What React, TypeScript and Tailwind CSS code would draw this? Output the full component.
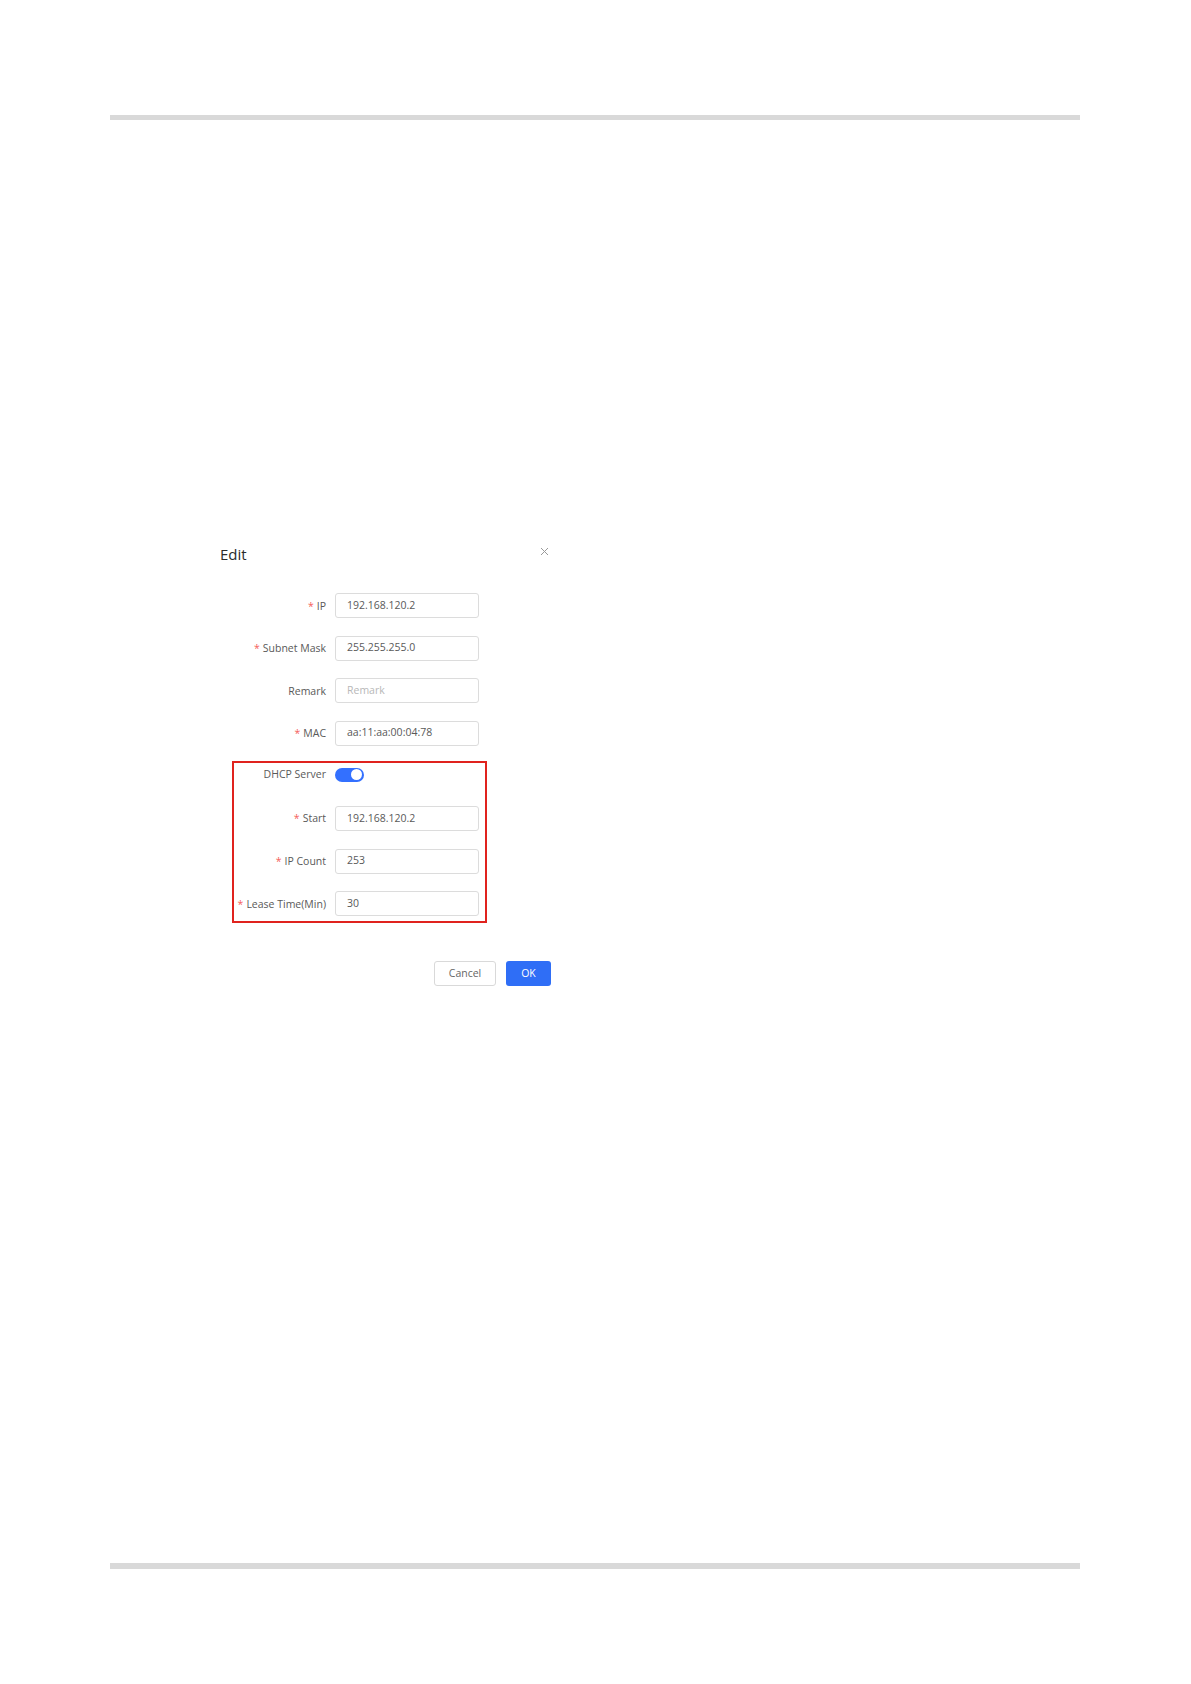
import React from "react";

const font = { fontFamily: '"Open Sans", "Noto Sans", sans-serif' };

function Row({
  label,
  required,
  value,
  placeholder,
  labelW,
}: {
  label: string;
  required?: boolean;
  value?: string;
  placeholder?: string;
  labelW: string;
}) {
  return (
    <div className="flex h-[25px] items-center gap-[9px]">
      <div className={`${labelW} shrink-0 whitespace-nowrap text-right text-[10.5px] leading-[14px] text-[#595959]`}>
        {required && <span className="mr-[3px] text-[#f5605a]">*</span>}
        {label}
      </div>
      <div className="flex h-[25px] w-[144px] items-center rounded-[3px] border border-[#dcdcdc] px-[11px] text-[10.5px] text-[#595959]">
        {value ? value : <span className="text-[#b8b8b8]">{placeholder}</span>}
      </div>
    </div>
  );
}

export default function App() {
  return (
    <div className="flex h-[1684px] w-full flex-col bg-white px-[110px]" style={font}>
      <div className="mt-[115px] h-[5px] w-[970px] bg-[#d9d9d9]" />
      <div className="ml-[110px] mt-[424px] flex w-[331px] flex-col">
        <div className="flex h-[20px] items-center justify-between">
          <span className="text-[15px] leading-[20px] text-[#2b2b2b]">Edit</span>
          <svg width="9" height="9" viewBox="0 0 9 9" className="mb-[6px] mr-[2px]">
            <path d="M1 1L8 8M8 1L1 8" stroke="#9a9a9a" strokeWidth="1" />
          </svg>
        </div>
        <div className="mt-[29px] flex flex-col gap-[17.6px]">
          <Row labelW="w-[106px]" label="IP" required value="192.168.120.2" />
          <Row labelW="w-[106px]" label="Subnet Mask" required value="255.255.255.0" />
          <Row labelW="w-[106px]" label="Remark" placeholder="Remark" />
          <Row labelW="w-[106px]" label="MAC" required value="aa:11:aa:00:04:78" />
          <div className="-mt-[2px] ml-[12px] flex w-[255px] flex-col gap-[17.6px] border-2 border-[#e0231e] pb-[5px]">
            <div className="flex h-[25px] items-center gap-[9px]">
              <div className="-mt-[3px] w-[92px] shrink-0 whitespace-nowrap text-right text-[10.5px] leading-[14px] text-[#595959]">
                DHCP Server
              </div>
              <div className="-mt-[2px] flex h-[14px] w-[29px] items-center justify-end rounded-full bg-[#3370ff] pr-[2px]">
                <div className="h-[11px] w-[11px] rounded-full bg-white" />
              </div>
            </div>
            <Row labelW="w-[92px]" label="Start" required value="192.168.120.2" />
            <Row labelW="w-[92px]" label="IP Count" required value="253" />
            <Row labelW="w-[92px]" label="Lease Time(Min)" required value="30" />
          </div>
        </div>
        <div className="mt-[38px] flex justify-end gap-[10px]">
          <div className="flex h-[25px] w-[62px] items-center justify-center rounded-[3px] border border-[#d9d9d9] text-[10.5px] text-[#666666]">
            Cancel
          </div>
          <div className="flex h-[25px] w-[45px] items-center justify-center rounded-[3px] bg-[#2f6ef6] text-[10.5px] text-white">
            OK
          </div>
        </div>
      </div>
      <div className="mb-[115px] mt-auto h-[6px] w-[970px] bg-[#d9d9d9]" />
    </div>
  );
}
